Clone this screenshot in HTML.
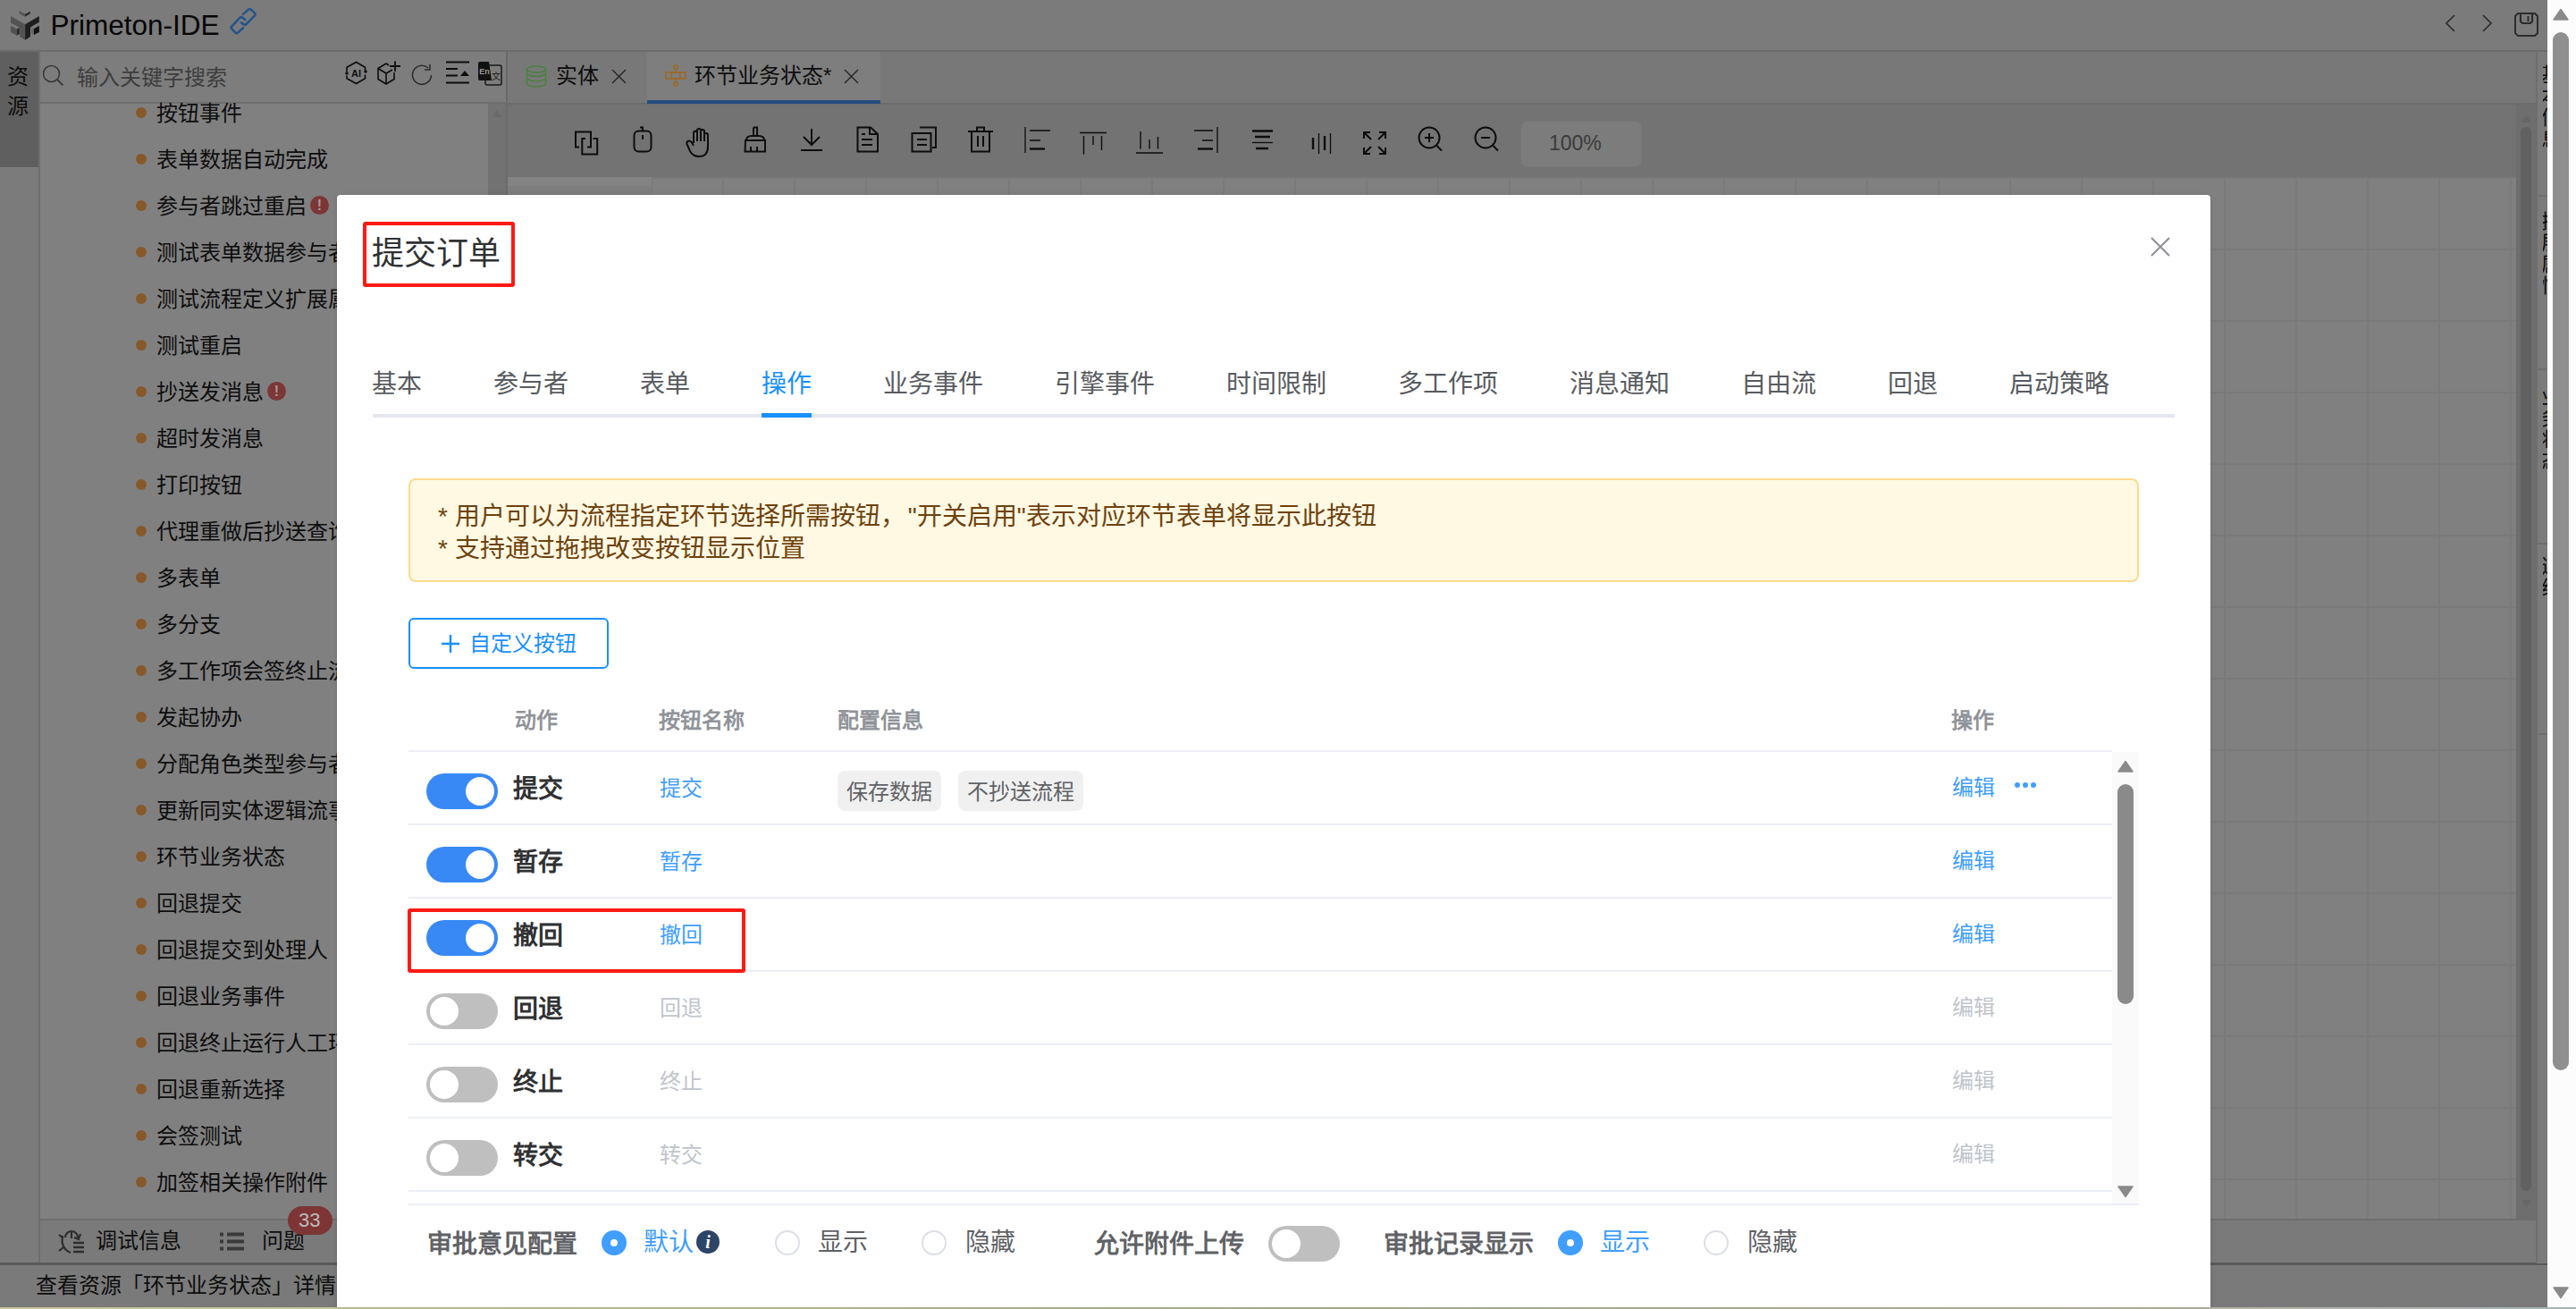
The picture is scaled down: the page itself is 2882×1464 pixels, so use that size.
<!DOCTYPE html>
<html lang="zh-CN"><head><meta charset="utf-8"><style>
*{box-sizing:border-box;margin:0;padding:0}
html,body{width:2882px;height:1464px;overflow:hidden;background:#fcfcfc;font-family:"Liberation Sans",sans-serif}
.a{position:absolute}
svg{position:absolute;overflow:visible}
#page{position:absolute;left:0;top:0;width:2850px;height:1462px;background:#808080;overflow:hidden}
#bline{position:absolute;left:0;top:1462px;width:2882px;height:2px;background:linear-gradient(to right,#c9c596 0%,#bfc190 30%,#aab68e 50%,#b2b598 72%,#bdb59f 81%,#a6b5b8 100%)}
.ti{position:absolute;left:175px;font-size:24px;line-height:24px;color:#0d0d0d;white-space:nowrap}
.bul{position:absolute;left:152px;width:12px;height:12px;border-radius:50%;background:#87592a}
.bad{position:absolute;width:21px;height:21px;border-radius:50%;background:#7c3636;color:#a09a9a;font:bold 16px/21px "Liberation Sans",sans-serif;text-align:center}
#canvas{left:568px;top:198px;width:2247px;height:1165px;background-color:#808080;
 background-image:linear-gradient(to right,#7a7a7a 2px,transparent 2px),linear-gradient(to bottom,#7a7a7a 2px,transparent 2px);
 background-size:80px 80px;background-position:0px 0px}
/* modal content */
#modal{left:377px;top:218px;width:2096px;height:1244px;background:#fff;border-radius:4px 4px 0 0;color:#303133;box-shadow:0 1px 6px rgba(0,0,0,.12)}
.t{position:absolute;white-space:nowrap;line-height:1}
.tab{position:absolute;top:198px;font-size:28px;line-height:28px;color:#585b60;white-space:nowrap}
.tab.act{color:#1890ff}
.red{position:absolute;border:4px solid #fd1a14;border-radius:3px}
.hd{position:absolute;top:576px;font-size:24px;line-height:24px;font-weight:bold;color:#909399;white-space:nowrap}
.row{position:absolute;left:0;width:1906px;height:82px;border-bottom:2px solid #ebeef5}
.sw{position:absolute;left:20px;top:24px;width:80px;height:40px;border-radius:20px;background:#3889f6}
.sw i{position:absolute;top:4px;left:44px;width:32px;height:32px;border-radius:50%;background:#fff}
.sw.off{background:#bfbfbf}
.sw.off i{left:4px}
.nm{position:absolute;left:117px;top:28px;font-size:28px;line-height:28px;font-weight:bold;color:#303133}
.lk{position:absolute;left:281px;top:29px;font-size:24px;line-height:24px;color:#409eff}
.lk.dis,.ed.dis{color:#c0c4cc}
.ed{position:absolute;left:1727px;top:28px;font-size:24px;line-height:24px;color:#409eff}
.tag{position:absolute;top:21px;height:45px;padding:0 10px;border-radius:8px;background:#f0f0f0;color:#606266;font-size:24px;line-height:47px}
.dots{position:absolute;left:1797px;top:34px;width:26px;height:6px}
.dots b{position:absolute;top:0;width:6px;height:6px;border-radius:50%;background:#409eff}
.flab{position:absolute;top:1160px;font-size:28px;line-height:28px;font-weight:bold;color:#606266}
.rad{position:absolute;top:1158px;width:28px;height:28px;border-radius:50%;border:2px solid #dcdfe6;background:#fff}
.rad.on{border:none;background:#409eff}
.rad.on:after{content:"";position:absolute;left:10px;top:10px;width:8px;height:8px;border-radius:50%;background:#fff}
.rtx{position:absolute;top:1158px;font-size:28px;line-height:28px;color:#606266}
.rtx.on{color:#409eff}
</style></head><body>
<div id="page">
<div class="a" style="left:0px;top:0px;width:2850px;height:56px;background:#7b7b7b"></div>
<div class="a" style="left:0px;top:56px;width:2850px;height:2px;background:#6b6b6b"></div>
<svg style="left:6px;top:4px" width="44" height="44" viewBox="0 0 1309 1309"><polygon points="180,420 660,690 660,1210 480,1100 480,800 180,640" fill="#525252"/><polygon points="180,740 380,850 380,1060 180,950" fill="#525252"/><polygon points="380,850 470,800 470,1010 380,1060" fill="#2a2a2a"/><polygon points="660,690 1125,420 1125,620 830,790 830,1100 660,1210" fill="#1e1e1e"/><polygon points="860,790 950,840 950,1040 860,990" fill="#676767"/><polygon points="950,840 1125,740 1125,950 950,1040" fill="#121212"/><polygon points="455,240 655,350 655,440 455,330" fill="#555"/><polygon points="655,350 830,270 830,335 655,440" fill="#2a2a2a"/></svg>
<div class="a" style="left:56.5px;top:12.5px;font-size:31.5px;line-height:31.5px;color:#050505;white-space:nowrap;">Primeton-IDE</div>
<svg style="left:250px;top:4px" width="45" height="40" viewBox="0 0 45 40" ><g fill="none" stroke="#24558c" stroke-width="2.6" stroke-linecap="round" stroke-linejoin="round"><path d="M22 11.9L28 6.6Q29.3 5.5 30.6 6.6L35 10.6Q36.2 12 35 13.4L25.5 23Q24.2 24.3 22.8 23.4L20 21.4"/><path d="M24.2 18L21.2 15.6Q19.9 14.6 18.6 15.6L9.2 25.6Q8 26.9 9.2 28.2L13.4 32.6Q14.7 33.8 16 32.6L22 27.2"/></g></svg>
<svg style="left:2735px;top:16px" width="13" height="20" viewBox="0 0 13 20" ><path d="M11 1L2 10L11 19" fill="none" stroke="#2d2d2d" stroke-width="1.7"/></svg>
<svg style="left:2776px;top:16px" width="13" height="20" viewBox="0 0 13 20" ><path d="M2 1L11 10L2 19" fill="none" stroke="#2d2d2d" stroke-width="1.7"/></svg>
<svg style="left:2813px;top:14px" width="27" height="27" viewBox="0 0 27 27" ><path d="M4 1H23L26 4V23L23 26H4L1 23V4Z" fill="none" stroke="#2d2d2d" stroke-width="2"/><path d="M7 1V10L9 12H18L20 10V1" fill="none" stroke="#2d2d2d" stroke-width="2.2"/><path d="M15.5 4V10" stroke="#2d2d2d" stroke-width="2"/></svg>
<div class="a" style="left:0px;top:58px;width:43px;height:129px;background:#5f5f5f"></div>
<div class="a" style="left:0px;top:188px;width:43px;height:1225px;background:#7b7b7b"></div>
<div class="a" style="left:8px;top:74px;font-size:24px;line-height:24px;color:#0d0d0d;white-space:nowrap;">资</div>
<div class="a" style="left:8px;top:107px;font-size:24px;line-height:24px;color:#0d0d0d;white-space:nowrap;">源</div>
<div class="a" style="left:43px;top:58px;width:2px;height:1355px;background:#6e6e6e"></div>
<div class="a" style="left:45px;top:58px;width:521px;height:57px;background:#7d7d7d"></div>
<div class="a" style="left:45px;top:114px;width:521px;height:2px;background:#6e6e6e"></div>
<svg style="left:47px;top:72px" width="25" height="25" viewBox="0 0 25 25" ><circle cx="10.5" cy="10.5" r="9" fill="none" stroke="#3a3a3a" stroke-width="1.6"/><path d="M17 17L23.5 23.5" stroke="#3a3a3a" stroke-width="1.8"/></svg>
<div class="a" style="left:86px;top:75px;font-size:24px;line-height:24px;color:#3d3d3d;white-space:nowrap;">输入关键字搜索</div>
<svg style="left:385px;top:68px" width="27" height="27" viewBox="0 0 27 27" ><path d="M3 12.5V7.3L13.5 1.5L23.5 7.3V10.5M23.5 15.5V19.7L13.5 25.5L3 19.7V16.5" fill="none" stroke="#0d0d0d" stroke-width="1.6"/><text x="13.5" y="18" font-family="Liberation Sans" font-weight="bold" font-size="11" text-anchor="middle" fill="#0d0d0d">AI</text><circle cx="3" cy="14" r="1.8" fill="#0d0d0d"/><circle cx="24" cy="12" r="1.8" fill="#0d0d0d"/></svg>
<svg style="left:422px;top:68px" width="28" height="28" viewBox="0 0 28 28" ><path d="M10 3L1 8.5V20.5L10 26L19 20.5V13M1 8.5L10 14L17 10M10 14V26M10 3L13 5" fill="none" stroke="#0d0d0d" stroke-width="1.6"/><path d="M20 0.5V12M14 6H26" stroke="#0d0d0d" stroke-width="1.8"/></svg>
<svg style="left:460px;top:71px" width="25" height="26" viewBox="0 0 25 26" ><path d="M22.5 13A10.5 10.5 0 1 1 19 5" fill="none" stroke="#2d2d2d" stroke-width="1.6"/><path d="M21 1V7H15" fill="none" stroke="#2d2d2d" stroke-width="1.6"/></svg>
<svg style="left:498px;top:68px" width="28" height="26" viewBox="0 0 28 26" ><path d="M1 1.5H27M1 9H14M1 16.5H14M1 24.5H27" stroke="#0d0d0d" stroke-width="2"/><path d="M17 17H27L22 11Z" fill="#0d0d0d"/></svg>
<svg style="left:535px;top:69px" width="28" height="26" viewBox="0 0 28 26" ><rect x="8" y="4" width="18" height="22" rx="2" fill="none" stroke="#1a1a1a" stroke-width="1.5"/><path d="M0 2Q0 0 2 0H12L15 21H2Q0 21 0 19Z" fill="#111"/><text x="7" y="14" font-family="Liberation Sans" font-weight="bold" font-size="9" text-anchor="middle" fill="#9a9a9a">En</text><text x="20" y="20" font-size="10" text-anchor="middle" fill="#1a1a1a">文</text></svg>
<div class="a" style="left:45px;top:116px;width:501px;height:1247px;background:#808080"></div>
<div class="a" style="left:546px;top:116px;width:20px;height:1247px;background:#727272"></div>
<svg style="left:551px;top:122px" width="10" height="10" viewBox="0 0 10 10" ><path d="M0 9L5 1L10 9Z" fill="#6a6a6a"/></svg>
<div class="a" style="left:566px;top:58px;width:2px;height:1355px;background:#6a6a6a"></div>
<div class="bul" style="top:120px"></div>
<div class="ti" style="top:115px">按钮事件</div>
<div class="bul" style="top:172px"></div>
<div class="ti" style="top:167px">表单数据自动完成</div>
<div class="bul" style="top:224px"></div>
<div class="ti" style="top:219px">参与者跳过重启</div>
<div class="bul" style="top:276px"></div>
<div class="ti" style="top:271px">测试表单数据参与者设置</div>
<div class="bul" style="top:328px"></div>
<div class="ti" style="top:323px">测试流程定义扩展属性</div>
<div class="bul" style="top:380px"></div>
<div class="ti" style="top:375px">测试重启</div>
<div class="bul" style="top:432px"></div>
<div class="ti" style="top:427px">抄送发消息</div>
<div class="bul" style="top:484px"></div>
<div class="ti" style="top:479px">超时发消息</div>
<div class="bul" style="top:536px"></div>
<div class="ti" style="top:531px">打印按钮</div>
<div class="bul" style="top:588px"></div>
<div class="ti" style="top:583px">代理重做后抄送查询</div>
<div class="bul" style="top:640px"></div>
<div class="ti" style="top:635px">多表单</div>
<div class="bul" style="top:692px"></div>
<div class="ti" style="top:687px">多分支</div>
<div class="bul" style="top:744px"></div>
<div class="ti" style="top:739px">多工作项会签终止流程</div>
<div class="bul" style="top:796px"></div>
<div class="ti" style="top:791px">发起协办</div>
<div class="bul" style="top:848px"></div>
<div class="ti" style="top:843px">分配角色类型参与者</div>
<div class="bul" style="top:900px"></div>
<div class="ti" style="top:895px">更新同实体逻辑流事件</div>
<div class="bul" style="top:952px"></div>
<div class="ti" style="top:947px">环节业务状态</div>
<div class="bul" style="top:1004px"></div>
<div class="ti" style="top:999px">回退提交</div>
<div class="bul" style="top:1056px"></div>
<div class="ti" style="top:1051px">回退提交到处理人</div>
<div class="bul" style="top:1108px"></div>
<div class="ti" style="top:1103px">回退业务事件</div>
<div class="bul" style="top:1160px"></div>
<div class="ti" style="top:1155px">回退终止运行人工环节</div>
<div class="bul" style="top:1212px"></div>
<div class="ti" style="top:1207px">回退重新选择</div>
<div class="bul" style="top:1264px"></div>
<div class="ti" style="top:1259px">会签测试</div>
<div class="bul" style="top:1316px"></div>
<div class="ti" style="top:1311px">加签相关操作附件</div>
<div class="bad" style="left:347px;top:219px">!</div>
<div class="bad" style="left:299px;top:427px">!</div>
<div class="a" style="left:45px;top:1363px;width:2792px;height:2px;background:#6e6e6e"></div>
<div class="a" style="left:45px;top:1365px;width:2792px;height:47px;background:#7a7a7a"></div>
<svg style="left:65px;top:1375px" width="30" height="28" viewBox="0 0 30 28" ><path d="M8 9A7 7 0 0 1 22 9M5 7Q3 16 8 22Q11 25 14 26M1 6L6 10M1 24L6 20M25 5L23 11L18 9M15 3V10" fill="none" stroke="#2d2d2d" stroke-width="2.2"/><path d="M17 15H29M17 20H29M17 25H29" stroke="#2d2d2d" stroke-width="2.6"/></svg>
<div class="a" style="left:107px;top:1376px;font-size:24px;line-height:24px;color:#0d0d0d;white-space:nowrap;">调试信息</div>
<svg style="left:246px;top:1378px" width="27" height="21" viewBox="0 0 27 21" ><path d="M0 2.5H4M8 2.5H27M0 10.5H4M8 10.5H27M0 18.5H4M8 18.5H27" stroke="#3a3a3a" stroke-width="4"/></svg>
<div class="a" style="left:293px;top:1376px;font-size:24px;line-height:24px;color:#0d0d0d;white-space:nowrap;">问题</div>
<div class="a" style="left:322px;top:1349px;width:50px;height:32px;background:#7d3535;border-radius:16px"></div>
<div class="a" style="left:334px;top:1354px;font-size:22px;line-height:22px;color:#bcbcbc;white-space:nowrap;">33</div>
<div class="a" style="left:0px;top:1412px;width:2850px;height:3px;background:#595959"></div>
<div class="a" style="left:0px;top:1415px;width:2850px;height:47px;background:#7a7a7a"></div>
<div class="a" style="left:40px;top:1426px;font-size:24px;line-height:24px;color:#0d0d0d;white-space:nowrap;">查看资源「环节业务状态」详情</div>
<div class="a" style="left:568px;top:58px;width:2269px;height:58px;background:#787878"></div>
<div class="a" style="left:568px;top:115px;width:2269px;height:2px;background:#6c6c6c"></div>
<div class="a" style="left:724px;top:58px;width:261px;height:57px;background:#7e7e7e"></div>
<div class="a" style="left:724px;top:112px;width:261px;height:4px;background:#234d7e"></div>
<svg style="left:588px;top:73px" width="24" height="25" viewBox="0 0 24 25" ><g fill="none" stroke="#4b803f" stroke-width="1.5"><ellipse cx="12" cy="4.5" rx="10.5" ry="3.5"/><path d="M1.5 4.5V20.5A10.5 3.5 0 0 0 22.5 20.5V4.5M1.5 10Q12 15 22.5 10M1.5 15.5Q12 20.5 22.5 15.5"/></g></svg>
<div class="a" style="left:622px;top:73px;font-size:24px;line-height:24px;color:#0d0d0d;white-space:nowrap;">实体</div>
<svg style="left:684px;top:77px" width="17" height="17" viewBox="0 0 17 17" ><path d="M1 1L16 16M16 1L1 16" stroke="#222" stroke-width="1.4"/></svg>
<svg style="left:744px;top:72px" width="24" height="25" viewBox="0 0 24 25" ><g fill="none" stroke="#9a6a28" stroke-width="1.6"><circle cx="12" cy="3" r="2.3"/><circle cx="12" cy="22" r="2.3"/><path d="M12 5.3V9M12 16V19.7"/><rect x="1" y="9" width="22" height="7"/><rect x="7" y="9" width="10" height="7"/></g></svg>
<div class="a" style="left:777px;top:73px;font-size:24px;line-height:24px;color:#0d0d0d;white-space:nowrap;">环节业务状态*</div>
<svg style="left:944px;top:77px" width="17" height="17" viewBox="0 0 17 17" ><path d="M1 1L16 16M16 1L1 16" stroke="#222" stroke-width="1.4"/></svg>
<div class="a" style="left:568px;top:117px;width:2247px;height:81px;background:#737373"></div>
<svg style="left:643px;top:146px" width="27" height="28" viewBox="0 0 27 28" ><path d="M5 18.4H1V1.5H18V18.4H14M12 9H8.3V26.5H25.2V9H20.5" fill="none" stroke="#0d0d0d" stroke-width="2"/></svg>
<svg style="left:708px;top:141px" width="22" height="30" viewBox="0 0 22 30" ><rect x="1.5" y="5.5" width="19" height="23" rx="5" fill="none" stroke="#0d0d0d" stroke-width="2"/><path d="M11 5.5V1.5H8M11 10V15" fill="none" stroke="#0d0d0d" stroke-width="2"/></svg>
<svg style="left:767px;top:143px" width="30" height="34" viewBox="0 0 30 34" ><path d="M9 17V6Q9 3.5 11 3.5Q13 3.5 13 6V15M13 15V3Q13 1 15 1Q17 1 17 3V15M17 15V4Q17 2 19 2Q21 2 21 4V15M21 15V8Q21 6 23 6Q25 6 25 8V21Q25 32 15 32Q8 32 5 26L1.5 18Q1 15 3.5 14.5Q5.5 14 7 16.5L9 20" fill="none" stroke="#0d0d0d" stroke-width="2"/></svg>
<svg style="left:832px;top:141px" width="26" height="30" viewBox="0 0 26 30" ><path d="M11 1.5H15V11M11 1.5V11M3 16Q3 11 9 11H17Q23 11 23 16M2 16H24L24 28.5H1.5ZM8 28V23M15 28V23" fill="none" stroke="#0d0d0d" stroke-width="2"/></svg>
<svg style="left:895px;top:143px" width="26" height="26" viewBox="0 0 26 26" ><path d="M13 1V19M4 10L13 19L22 10M1 25H25" fill="none" stroke="#0d0d0d" stroke-width="2"/></svg>
<svg style="left:958px;top:141px" width="26" height="30" viewBox="0 0 26 30" ><path d="M1.5 1.5H16L24 9V28.5H1.5Z" fill="none" stroke="#0d0d0d" stroke-width="2"/><path d="M15 1.5V9H24" fill="none" stroke="#0d0d0d" stroke-width="2"/><path d="M6 9H10M6 15H18M6 21H18" fill="none" stroke="#0d0d0d" stroke-width="2"/></svg>
<svg style="left:1019px;top:141px" width="30" height="30" viewBox="0 0 30 30" ><path d="M10 1.5H28V24H24" fill="none" stroke="#0d0d0d" stroke-width="2"/><rect x="1.5" y="8" width="21" height="20.5" fill="none" stroke="#0d0d0d" stroke-width="2"/><path d="M7 15H18M7 21H18" fill="none" stroke="#0d0d0d" stroke-width="2"/></svg>
<svg style="left:1082px;top:141px" width="30" height="30" viewBox="0 0 30 30" ><path d="M1 6H29M11 6V1.5H19V6M5 6V28.5H25V6M12 11V23M18 11V23" fill="none" stroke="#0d0d0d" stroke-width="2"/></svg>
<svg style="left:1146px;top:141px" width="30" height="31" viewBox="0 0 30 31" ><path d="M1 1V30M6 5H29M6 16H18" stroke="#0d0d0d" stroke-width="1.3" fill="none"/><path d="M6 25.5H23" stroke="#0d0d0d" stroke-width="2.4"/></svg>
<svg style="left:1207px;top:141px" width="32" height="32" viewBox="0 0 32 32" ><path d="M1 7.5H31M5.5 11V31.5M16 11V21M25.5 11V27" stroke="#0d0d0d" stroke-width="1.4" fill="none"/></svg>
<svg style="left:1270px;top:146px" width="31" height="27" viewBox="0 0 31 27" ><path d="M6 1V20.5M16 10V20.5M25.5 7V20.5M1 25H31" stroke="#0d0d0d" stroke-width="1.4" fill="none"/></svg>
<svg style="left:1335px;top:141px" width="28" height="31" viewBox="0 0 28 31" ><path d="M27 1V30M1 5H22M10 16H22" stroke="#0d0d0d" stroke-width="1.3" fill="none"/><path d="M5 25.5H22" stroke="#0d0d0d" stroke-width="2.4"/></svg>
<svg style="left:1400px;top:144px" width="25" height="25" viewBox="0 0 25 25" ><path d="M1 2.5H24M4 9H21M5 22H19" stroke="#0d0d0d" stroke-width="2.4" fill="none"/><path d="M1 15.5H24" stroke="#0d0d0d" stroke-width="1.3"/></svg>
<svg style="left:1467px;top:148px" width="24" height="25" viewBox="0 0 24 25" ><path d="M2 6V19M15 4V20" stroke="#0d0d0d" stroke-width="2.4" fill="none"/><path d="M8.5 1V24M21.5 1V24" stroke="#0d0d0d" stroke-width="1.3"/></svg>
<svg style="left:1524px;top:146px" width="28" height="28" viewBox="0 0 28 28" ><path d="M2 9V2H9M2 2L10 10M19 2H26V9M26 2L18 10M2 19V26H9M2 26L10 18M19 26H26V19M26 26L18 18" fill="none" stroke="#0d0d0d" stroke-width="2"/></svg>
<svg style="left:1586px;top:141px" width="28" height="29" viewBox="0 0 28 29" ><circle cx="13" cy="13" r="11.5" fill="none" stroke="#0d0d0d" stroke-width="2"/><path d="M20.5 21L27 27.5M13 8V18M8 13H18" fill="none" stroke="#0d0d0d" stroke-width="2"/></svg>
<svg style="left:1649px;top:141px" width="28" height="29" viewBox="0 0 28 29" ><circle cx="13" cy="13" r="11.5" fill="none" stroke="#0d0d0d" stroke-width="2"/><path d="M20.5 21L27 27.5M8 13H18" fill="none" stroke="#0d0d0d" stroke-width="2"/></svg>
<div class="a" style="left:1701px;top:135px;width:136px;height:52px;background:#7c7c7c;border:1px solid #777;border-radius:8px"></div>
<div class="a" style="left:1733px;top:149px;font-size:23px;line-height:23px;color:#3a3a3a;white-space:nowrap;">100%</div>
<div class="a" id="canvas"></div>
<div class="a" style="left:568px;top:198px;width:161px;height:20px;background:#7e7e7e"></div>
<div class="a" style="left:568px;top:198px;width:161px;height:10px;background:#838383"></div>
<div class="a" style="left:2815px;top:117px;width:22px;height:1246px;background:#6e6e6e"></div>
<svg style="left:2821px;top:128px" width="11" height="9" viewBox="0 0 11 9" ><path d="M0 9L5.5 1L11 9Z" fill="#666"/></svg>
<div class="a" style="left:2820px;top:142px;width:12px;height:1190px;background:#616161;border-radius:6px"></div>
<svg style="left:2821px;top:1342px" width="11" height="9" viewBox="0 0 11 9" ><path d="M0 0L5.5 8L11 0Z" fill="#666"/></svg>
<div class="a" style="left:2837px;top:58px;width:13px;height:1355px;background:#7b7b7b"></div>
<div class="a" style="left:2837px;top:58px;width:2px;height:1355px;background:#6e6e6e"></div>
<div class="a" style="left:2839px;top:218px;width:11px;height:2px;background:#6e6e6e"></div>
<div class="a" style="left:2839px;top:412px;width:11px;height:2px;background:#6e6e6e"></div>
<div class="a" style="left:2839px;top:607px;width:11px;height:2px;background:#6e6e6e"></div>
<div class="a" style="left:2839px;top:820px;width:11px;height:2px;background:#6e6e6e"></div>
<div class="a" style="left:2845px;top:72px;width:5px;overflow:hidden;height:106px"><div style="position:absolute;left:-2px;top:0;width:24px;font-size:22px;line-height:24px;color:#0d0d0d">基<br>本<br>信<br>息</div></div>
<div class="a" style="left:2845px;top:236px;width:5px;overflow:hidden;height:106px"><div style="position:absolute;left:-2px;top:0;width:24px;font-size:22px;line-height:24px;color:#0d0d0d">扩<br>展<br>属<br>性</div></div>
<div class="a" style="left:2845px;top:432px;width:5px;overflow:hidden;height:106px"><div style="position:absolute;left:-2px;top:0;width:24px;font-size:22px;line-height:24px;color:#0d0d0d">业<br>务<br>状<br>态</div></div>
<div class="a" style="left:2845px;top:622px;width:5px;overflow:hidden;height:58px"><div style="position:absolute;left:-2px;top:0;width:24px;font-size:22px;line-height:24px;color:#0d0d0d">连<br>线</div></div>
</div>
<div class="a" style="left:2850px;top:0px;width:32px;height:1462px;background:#fcfcfc"></div>
<svg style="left:2856px;top:9px" width="18" height="14" viewBox="0 0 18 14" ><path d="M9 1.5L17 13H1Z" fill="#8a8a8a" stroke="#8a8a8a" stroke-width="1.5" stroke-linejoin="round"/></svg>
<div class="a" style="left:2856px;top:36px;width:18px;height:1161px;background:#8f8f8f;border-radius:9px"></div>
<svg style="left:2856px;top:1439px" width="18" height="14" viewBox="0 0 18 14" ><path d="M9 12.5L17 1H1Z" fill="#8a8a8a" stroke="#8a8a8a" stroke-width="1.5" stroke-linejoin="round"/></svg>
<div class="a" id="bline"></div>
<div class="a" id="modal">
<div class="red" style="left:29px;top:30px;width:170px;height:73px"></div>
<div class="t" style="left:39px;top:48px;font-size:36px;color:#303133">提交订单</div>
<svg style="left:2029px;top:47px" width="22" height="22" viewBox="0 0 22 22"><path d="M1 1L21 21M21 1L1 21" stroke="#909399" stroke-width="2.2" fill="none"/></svg>
<div class="tab" style="left:39px">基本</div>
<div class="tab" style="left:175px">参与者</div>
<div class="tab" style="left:339px">表单</div>
<div class="tab act" style="left:475px">操作</div>
<div class="tab" style="left:611px">业务事件</div>
<div class="tab" style="left:803px">引擎事件</div>
<div class="tab" style="left:995px">时间限制</div>
<div class="tab" style="left:1187px">多工作项</div>
<div class="tab" style="left:1379px">消息通知</div>
<div class="tab" style="left:1571px">自由流</div>
<div class="tab" style="left:1735px">回退</div>
<div class="tab" style="left:1871px">启动策略</div>
<div class="a" style="left:40px;top:245px;width:2016px;height:4px;background:#e4e7ed"></div>
<div class="a" style="left:475px;top:244px;width:56px;height:5px;background:#1890ff"></div>
<div class="a" style="left:80px;top:317px;width:1936px;height:116px;background:#fff8e2;border:2px solid #fbdb8c;border-radius:8px"></div>
<div class="t" style="left:113px;top:342px;font-size:28px;line-height:36px;color:#6e420e">* 用户可以为流程指定环节选择所需按钮，<span style="margin-left:3px">"</span>开关启用"表示对应环节表单将显示此按钮<br>* 支持通过拖拽改变按钮显示位置</div>
<div class="a" style="left:80px;top:473px;width:224px;height:57px;border:2px solid #1890ff;border-radius:6px"></div>
<svg style="left:117px;top:492px" width="20" height="20" viewBox="0 0 20 20"><path d="M10 0V20M0 10H20" stroke="#1890ff" stroke-width="2.4"/></svg>
<div class="t" style="left:148px;top:490px;font-size:24px;line-height:24px;color:#1890ff">自定义按钮</div>
<div class="hd" style="left:199px">动作</div>
<div class="hd" style="left:360px">按钮名称</div>
<div class="hd" style="left:560px">配置信息</div>
<div class="hd" style="left:1806px">操作</div>
<div class="a" style="left:80px;top:621px;width:1906px;height:2px;background:#ebeef5"></div>
<div class="a" style="left:80px;top:623px;width:1936px;height:505px;overflow:hidden">
<div class="row" style="top:0px"><div class="sw"><i></i></div><div class="nm">提交</div><div class="lk">提交</div><div class="tag" style="left:480px">保存数据</div><div class="tag" style="left:615px">不抄送流程</div><div class="dots"><b style="left:0"></b><b style="left:9px"></b><b style="left:18px"></b></div><div class="ed">编辑</div></div>
<div class="row" style="top:82px"><div class="sw"><i></i></div><div class="nm">暂存</div><div class="lk">暂存</div><div class="ed">编辑</div></div>
<div class="row" style="top:164px"><div class="sw"><i></i></div><div class="nm">撤回</div><div class="lk">撤回</div><div class="ed">编辑</div></div>
<div class="row" style="top:246px"><div class="sw off"><i></i></div><div class="nm">回退</div><div class="lk dis">回退</div><div class="ed dis">编辑</div></div>
<div class="row" style="top:328px"><div class="sw off"><i></i></div><div class="nm">终止</div><div class="lk dis">终止</div><div class="ed dis">编辑</div></div>
<div class="row" style="top:410px"><div class="sw off"><i></i></div><div class="nm">转交</div><div class="lk dis">转交</div><div class="ed dis">编辑</div></div>
<div class="row" style="top:492px"><div class="sw off"><i></i></div></div>
<div class="a" style="left:1906px;top:0;width:30px;height:505px;background:#fafafa"></div>
<svg style="left:1912px;top:9px" width="18" height="14" viewBox="0 0 18 14"><path d="M9 1.5L17 13H1Z" fill="#8a8a8a" stroke="#8a8a8a" stroke-width="1.5" stroke-linejoin="round"/></svg>
<div class="a" style="left:1912px;top:36px;width:18px;height:246px;border-radius:9px;background:#8a8a8a"></div>
<svg style="left:1912px;top:485px" width="18" height="14" viewBox="0 0 18 14"><path d="M9 12.5L17 1H1Z" fill="#8a8a8a" stroke="#8a8a8a" stroke-width="1.5" stroke-linejoin="round"/></svg>
</div>
<div class="red" style="left:79px;top:798px;width:378px;height:72px"></div>
<div class="a" style="left:80px;top:1128px;width:1936px;height:2px;background:#ebeef5"></div>
<div class="flab" style="left:101px">审批意见配置</div>
<div class="rad on" style="left:296px"></div>
<div class="rtx on" style="left:343px">默认</div>
<div class="a" style="left:402px;top:1158px;width:26px;height:26px;border-radius:50%;background:#2c4466;color:#fff;font:italic bold 20px/26px 'Liberation Serif',serif;text-align:center">i</div>
<div class="rad" style="left:490px"></div>
<div class="rtx" style="left:538px">显示</div>
<div class="rad" style="left:654px"></div>
<div class="rtx" style="left:703px">隐藏</div>
<div class="flab" style="left:847px">允许附件上传</div>
<div class="a" style="left:1042px;top:1153px;width:80px;height:40px;border-radius:20px;background:#bfbfbf"><i style="position:absolute;left:4px;top:4px;width:32px;height:32px;border-radius:50%;background:#fff"></i></div>
<div class="flab" style="left:1171px">审批记录显示</div>
<div class="rad on" style="left:1366px"></div>
<div class="rtx on" style="left:1413px">显示</div>
<div class="rad" style="left:1529px"></div>
<div class="rtx" style="left:1578px">隐藏</div>
</div>
</body></html>
